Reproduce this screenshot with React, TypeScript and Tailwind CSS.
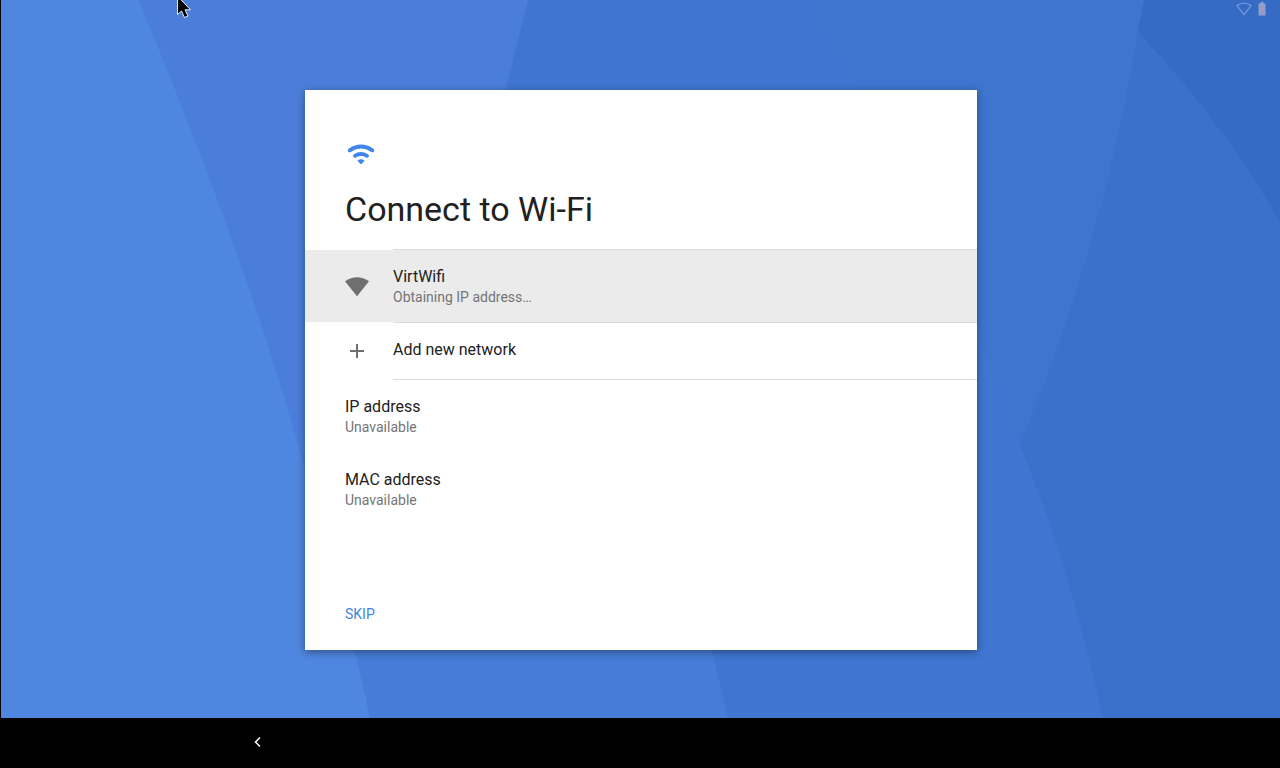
import React, { useState } from "react";

const details = [
  { label: "IP address", value: "Unavailable" },
  { label: "MAC address", value: "Unavailable" },
];

const Wallpaper = () => (
  <svg
    className="absolute inset-0 w-full h-full"
    viewBox="1 0 1279 718"
    preserveAspectRatio="none"
    aria-hidden="true"
  >
    <rect x="1" width="1279" height="718" fill="#4f86df" />
    <path d="M139 0Q249 265 303 461Q345 600 370 718H1280V0Z" fill="#477dd8" />
    <path d="M139 0Q249 265 303 461L400 461L528 0Z" fill="#4b7eda" />
    <path d="M528 0L506 90Q470 240 420 370Q650 440 712 650L728 718H1280V0Z" fill="#4076d1" />
    <path d="M805 0Q930 200 1020 445Q1103 245 1138 32L1144 0Z" fill="#3f75ce" />
    <path d="M1144 0L1138 32Q1103 245 1020 445Q1068 560 1103 718H1280V0Z" fill="#3b71cb" />
    <path d="M1144 0L1138 32Q1220 118 1280 222V0Z" fill="#356bc3" />
  </svg>
);

const StatusBar = () => (
  <header className="relative flex justify-end h-[22px] pt-px pr-2.5">
    <svg className="w-4 h-4 mr-0.5" viewBox="0 0 16 16" fill="none" aria-hidden="true">
      <path d="M1 4.6Q8 -0.4 15 4.6L8 13.6Z" stroke="#6f98da" strokeWidth="1.3" />
    </svg>
    <svg className="w-4 h-4" viewBox="0 0 16 16" aria-hidden="true">
      <path d="M6.5 1h3v1.5h2V14.500h-7V2.500h2Z" fill="#8b9fd3" />
      <path d="M7.200 5h1.700v4.500H7.200ZM7.200 10.500h1.700v1.500H7.200Z" fill="#c58b9b" />
    </svg>
  </header>
);

const App = () => {
  const [selected, setSelected] = useState("VirtWifi");

  return (
    <div className="flex flex-col min-h-screen overflow-hidden bg-black font-['Roboto',sans-serif] text-[#212121]">
      <div className="relative flex flex-col flex-1 border-l border-black pl-px">
        <Wallpaper />
        <StatusBar />

        <main className="relative flex flex-1 items-center justify-center">
          <section className="w-full max-w-2xl bg-white pt-12 pb-4 shadow-[0_2px_8px_rgba(0,0,0,0.4)]">
            <div className="px-10 pb-5">
              <svg className="w-8 h-8" viewBox="0 0 32 32" fill="none" aria-hidden="true">
                <g stroke="#4285ec" strokeWidth="3.900" strokeLinecap="round">
                  <path d="M4.700 12.300Q16 4.800 27.300 12.300" />
                  <path d="M10 17.800Q16 14.200 22 17.800" />
                </g>
                <path d="M12.400 22.500Q16 20.100 19.600 22.500L16.800 25.700Q16 26.400 15.200 25.700Z" fill="#4285ec" />
              </svg>
              <h1 className="mt-[19px] text-[34px] leading-10">Connect to Wi-Fi</h1>
            </div>

            {/* Networks */}
            <div className="ml-22 h-px bg-[#dcdcdc]" />
            <button
              type="button"
              onClick={() => setSelected("VirtWifi")}
              className={`flex w-full items-center gap-6 px-10 pt-[17px] pb-[15px] text-left ${selected === "VirtWifi" ? "bg-[#ebebeb]" : "bg-white"}`}
            >
              <svg className="w-6 h-6" viewBox="0 0 24 24" aria-hidden="true">
                <path d="M0 6.300Q12 -2 24 6.300L12 21.300Z" fill="#6f6f6f" />
              </svg>
              <span className="flex flex-col">
                <span className="text-base leading-5">VirtWifi</span>
                <span className="text-sm leading-5 text-[#757575]">Obtaining IP address…</span>
              </span>
            </button>
            <div className="ml-22 h-px bg-[#dcdcdc]" />
            <button
              type="button"
              onClick={() => setSelected("new")}
              className="flex w-full h-14 items-center gap-6 px-10 pb-0.5 text-left"
            >
              <svg className="w-6 h-6" viewBox="0 0 24 24" aria-hidden="true">
                <path d="M11 6h2v6h6v2h-6v6h-2v-6H5v-2h6Z" fill="#6f6f6f" />
              </svg>
              <span className="text-base leading-5">Add new network</span>
            </button>
            <div className="ml-22 h-px bg-[#dcdcdc]" />

            {/* Device info */}
            <dl>
              {details.map((item) => (
                <div key={item.label} className="px-10 pt-[17px] pb-4">
                  <dt className="text-base leading-5">{item.label}</dt>
                  <dd className="text-sm leading-5 text-[#757575]">{item.value}</dd>
                </div>
              ))}
            </dl>

            <div className="px-10 pt-17">
              <button type="button" className="block text-sm leading-10 text-[#4285e0]">SKIP</button>
            </div>
          </section>
        </main>

        {/* Mouse pointer */}
        <svg className="absolute -top-1 left-[175px] w-4 h-6" viewBox="0 0 16 24" aria-hidden="true">
          <path
            d="M1.500 0V18.500L5.500 15L8.500 21.500L12 20L9 13.800H14.500Z"
            fill="#000"
            stroke="#e8eefa"
            strokeWidth="1"
          />
        </svg>
      </div>

      <nav className="flex h-[50px] items-center pl-[246px] pb-0.5">
        <button type="button" aria-label="Back" className="flex w-6 h-6 items-center justify-center">
          <svg className="w-3 h-3" viewBox="0 0 12 12" fill="none" aria-hidden="true">
            <path d="M8 1.500L3.500 6L8 10.500" stroke="#fff" strokeWidth="1.500" />
          </svg>
        </button>
      </nav>
    </div>
  );
};

export default App;
